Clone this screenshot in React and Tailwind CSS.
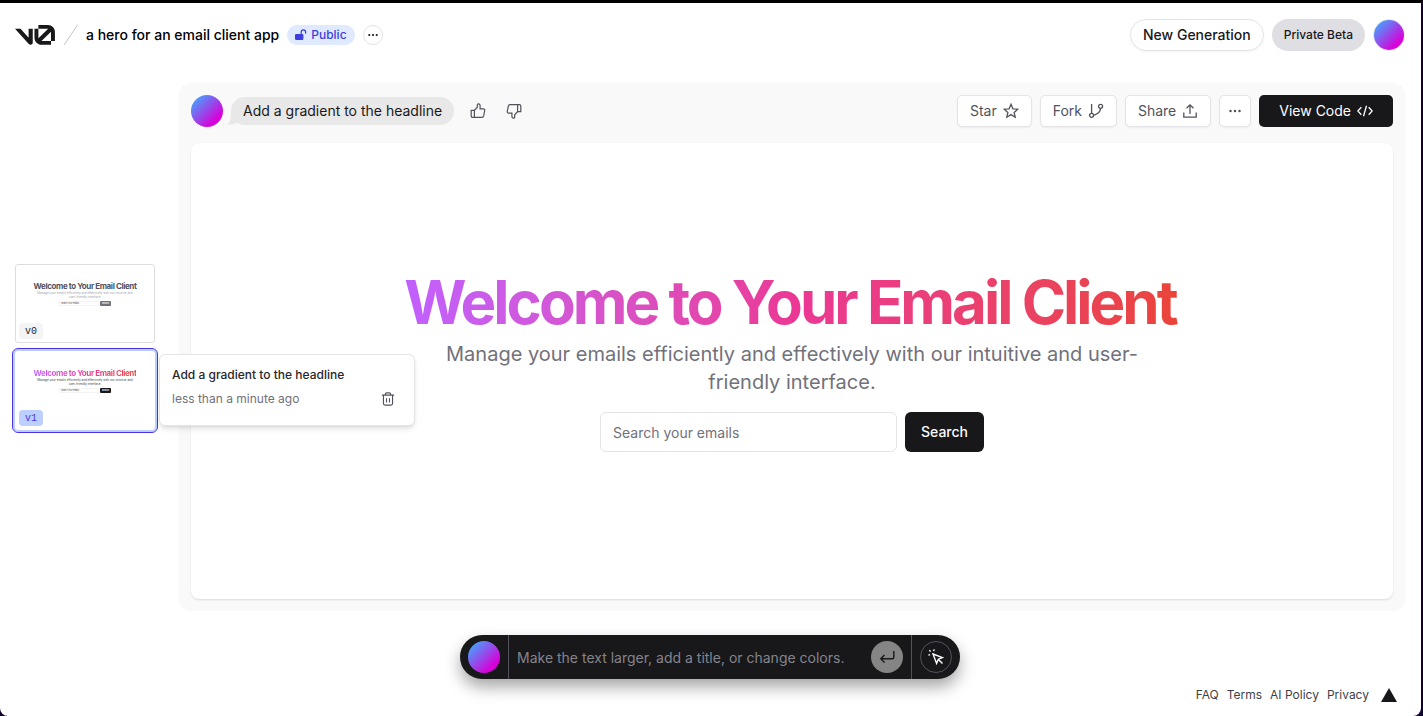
import React from "react";

function Icon({ children, className = "size-4", width = 1.3 }) {
  return (
    <svg
      viewBox="0 0 16 16"
      className={className}
      fill="none"
      stroke="currentColor"
      strokeWidth={width}
      aria-hidden="true"
    >
      {children}
    </svg>
  );
}

function ThumbUpShape() {
  return (
    <>
      <path d="M1.2 7.4h3.2v7H2.7a1.5 1.5 0 0 1-1.5-1.5z" />
      <path d="M4.4 7.4 7.3 4.2V2.1c0-.8.4-1.3 1.1-1.3.9 0 1.7.7 1.7 1.7v3.3h3.3c.9 0 1.5.8 1.3 1.7l-1 5.4c-.2.9-.9 1.5-1.8 1.5H4.4" />
    </>
  );
}

function Dots({ className }) {
  return (
    <svg viewBox="0 0 16 16" className={className} fill="currentColor" aria-hidden="true">
      <circle cx="2" cy="8" r="1.7" />
      <circle cx="8" cy="8" r="1.7" />
      <circle cx="14" cy="8" r="1.7" />
    </svg>
  );
}

function Logo() {
  return (
    <svg viewBox="0 0 40 20" className="h-5 w-10" fill="#18181b" aria-label="v0">
      <path d="M23.3919 0H32.9188C36.7819 0 39.9136 3.13165 39.9136 6.99475V16.0805H36.0006V6.99475C36.0006 6.90167 35.9969 6.80925 35.9898 6.71766L26.4628 16.079C26.4949 16.08 26.5272 16.0805 26.5595 16.0805H36.0006V19.7762H26.5595C22.6964 19.7762 19.4788 16.6139 19.4788 12.7508V3.68923H23.3919V12.7508C23.3919 12.9253 23.4054 13.0977 23.4316 13.2668L33.1682 3.6995C33.0861 3.6927 33.003 3.68923 32.9188 3.68923H23.3919V0Z" />
      <path d="M13.7688 19.0956L0 3.68759H5.53933L13.6231 12.7337V3.68759H17.7535V17.5746C17.7535 19.6705 15.1654 20.6584 13.7688 19.0956Z" />
    </svg>
  );
}

function Avatar({ className = "size-8" }) {
  return (
    <span
      className={`${className} block shrink-0 rounded-full bg-[linear-gradient(135deg,#3fa9ff_8%,#d900d9_78%)]`}
    />
  );
}

function Header() {
  return (
    <header className="flex h-16 items-center justify-between pr-4 pl-[15px]">
      <div className="flex items-center gap-2">
        <a href="#home">
          <Logo />
        </a>
        <svg viewBox="0 0 15 20" className="h-5 w-[15px]" fill="none" stroke="#c4c4c4" aria-hidden="true">
          <path d="M1 20 14.500 0" />
        </svg>
        <h1 className="text-sm font-medium text-black">a hero for an email client app</h1>
        <span className="flex h-5 items-center gap-1 rounded-full bg-[#dfeaff] px-2 text-xs font-medium text-[#3d3fdc]">
          <svg viewBox="0 0 12 12" className="size-3" aria-hidden="true">
            <rect x="0" y="5" width="8.4" height="6" rx="1.3" fill="currentColor" />
            <path d="M6.2 5.2V3a2.2 2.2 0 0 1 4.4 0v1.8" fill="none" stroke="currentColor" strokeWidth="1.2" />
          </svg>
          Public
        </span>
        <button
          type="button"
          aria-label="More options"
          className="flex size-5 items-center justify-center rounded-full border border-zinc-200 bg-white text-zinc-900"
        >
          <Dots className="size-2.5" />
        </button>
      </div>
      <div className="flex items-center gap-2">
        <button
          type="button"
          className="h-8 rounded-full border border-zinc-200 px-3 text-sm font-medium text-zinc-900 shadow-xs"
        >
          New Generation
        </button>
        <button
          type="button"
          className="h-8 rounded-full bg-[#dfdee3] px-3 text-xs font-medium text-zinc-900"
        >
          Private Beta
        </button>
        <button type="button" aria-label="Account" className="rounded-full border border-zinc-200">
          <Avatar className="size-[30px]" />
        </button>
      </div>
    </header>
  );
}

function Thumbnail({ label, active, children }) {
  return (
    <div className="relative">
      <button
        type="button"
        aria-label={`Version ${label}`}
        className={`relative flex h-[79px] w-[140px] flex-col items-center rounded-[3px] bg-white pt-[17px] outline-1 ${
          active ? "ring-2 ring-[#bccfff] outline-offset-2 outline-[#4a34ea]" : "-outline-offset-1 outline-[#dededf]"
        }`}
      >
        <span
          className={`text-[8px] leading-[10px] font-bold tracking-tighter ${
            active
              ? "bg-linear-to-r from-[#c160ff] via-[#eb3896] to-[#ea4438] bg-clip-text text-transparent"
              : "text-zinc-600"
          }`}
        >
          Welcome to Your Email Client
        </span>
        <span className={`w-24 text-center text-[3px] leading-[4px] ${active ? "text-zinc-700" : "text-zinc-400"}`}>
          Manage your emails efficiently and effectively with our intuitive and user-friendly interface.
        </span>
        <span className="mt-0.5 flex h-[5px] gap-px">
          <span className="w-10 border border-zinc-100 pl-px text-left text-[2px] leading-[3px] text-zinc-700">
            Search your emails
          </span>
          <span
            className={`w-[11px] rounded-[1px] text-center text-[2px] leading-[5px] font-bold text-white ${
              active ? "bg-zinc-900" : "bg-zinc-500"
            }`}
          >
            Search
          </span>
        </span>
        <span
          className={`absolute bottom-1 left-1 flex h-4 w-6 items-center justify-center rounded-sm font-['Liberation_Mono',monospace] text-[10px] ${
            active ? "bg-[#bccfff] text-[#4a34ea]" : "bg-zinc-100 text-zinc-800"
          }`}
        >
          {label}
        </span>
      </button>
      {children}
    </div>
  );
}

function VersionCard() {
  return (
    <div className="absolute top-[3px] left-36 z-10 flex h-18 w-64 flex-col gap-1 rounded-md border border-zinc-200 bg-white px-3 pt-[10px] text-xs shadow-md">
      <p className="leading-5 font-medium text-zinc-800">Add a gradient to the headline</p>
      <div className="flex items-center justify-between pr-1 leading-5 text-zinc-500">
        <span>less than a minute ago</span>
        <button type="button" aria-label="Delete version" className="flex size-5 items-center justify-center text-zinc-600">
          <Icon className="size-3.5">
            <path d="M1 3.6h14M5 3.4V2.6C5 1.6 5.6 1 6.6 1h2.8c1 0 1.6.6 1.6 1.6v.8M2.8 3.6v9.6c0 1 .7 1.8 1.8 1.8h6.8c1.1 0 1.8-.8 1.8-1.8V3.6M6.3 7v5M9.7 7v5" />
          </Icon>
        </button>
      </div>
    </div>
  );
}

const toolClass =
  "flex h-8 items-center gap-1.5 rounded-[5px] border border-zinc-200 bg-white px-3 text-sm text-zinc-600 shadow-xs";

function Toolbar() {
  return (
    <div className="flex items-center justify-between">
      <div className="flex items-center">
        <Avatar />
        <div className="relative ml-2 flex h-7 items-center rounded-full bg-[#e8e8e8] px-3 text-sm text-zinc-900">
          <svg viewBox="0 0 14 14" className="absolute bottom-0 -left-1 size-3.5" fill="#e8e8e8" aria-hidden="true">
            <path d="M4 1C4 7 3.600 11 0 13.600c3.500.2 7-.4 10-2.100L14 6z" />
          </svg>
          <span className="relative">Add a gradient to the headline</span>
        </div>
        <div className="ml-2 flex gap-1 text-zinc-600">
          <button type="button" aria-label="Good result" className="flex size-8 items-center justify-center">
            <Icon width={1.2}>
              <ThumbUpShape />
            </Icon>
          </button>
          <button type="button" aria-label="Bad result" className="flex size-8 items-center justify-center">
            <Icon className="size-4 rotate-180" width={1.2}>
              <ThumbUpShape />
            </Icon>
          </button>
        </div>
      </div>
      <div className="flex items-center gap-2">
        <button type="button" className={toolClass}>
          Star
          <Icon>
            <path d="m8 1.300 1.900 4.500 4.900.4-3.700 3.200 1.100 4.800L8 11.600l-4.200 2.600 1.100-4.800L1.200 6.200l4.900-.4z" />
          </Icon>
        </button>
        <button type="button" className={toolClass}>
          Fork
          <Icon>
            <path d="M3.600 1v9.200M3.600 12.300c4 0 9-2.500 9-7.300" />
            <circle cx="3.600" cy="12.300" r="2" fill="white" />
            <circle cx="12.600" cy="3.300" r="2" fill="white" />
          </Icon>
        </button>
        <button type="button" className={toolClass}>
          Share
          <Icon>
            <path d="M1.800 9.500v4.700h12.400V9.500M8 11V2M4.500 5.300 8 1.800l3.500 3.500" />
          </Icon>
        </button>
        <button
          type="button"
          aria-label="More actions"
          className="flex size-8 items-center justify-center rounded-[5px] border border-zinc-200 bg-white text-zinc-600 shadow-xs"
        >
          <Dots className="size-3" />
        </button>
        <button
          type="button"
          className="flex h-8 items-center gap-1.5 rounded-[5px] bg-zinc-900 px-5 text-sm text-white"
        >
          View Code
          <Icon>
            <path d="M4.300 4.300.8 8l3.500 3.700M11.700 4.300 15.200 8l-3.500 3.700M9.500 2.800l-3 10.400" />
          </Icon>
        </button>
      </div>
    </div>
  );
}

function Preview() {
  return (
    <div className="flex flex-1 flex-col items-center justify-center rounded-lg bg-white px-6 pb-[18px] text-center shadow-[0_1px_2px_rgba(0,0,0,0.12)]">
      <h2 className="bg-linear-to-r from-[#c160ff] via-[#eb3896] to-[#ea4438] bg-clip-text pr-1 text-6xl leading-[60px] font-bold tracking-tighter text-transparent">
        Welcome to Your Email Client
      </h2>
      <p className="mt-2 max-w-[700px] text-xl text-zinc-500">
        Manage your emails efficiently and effectively with our intuitive and user-friendly interface.
      </p>
      <form className="mt-4 flex w-96 gap-2" onSubmit={(e) => e.preventDefault()}>
        <input
          type="email"
          aria-label="Search your emails"
          placeholder="Search your emails"
          className="h-10 min-w-0 flex-1 rounded-md border border-zinc-200 px-3 text-sm placeholder:text-zinc-500"
        />
        <button type="submit" className="h-10 rounded-md bg-zinc-900 px-4 text-sm font-medium text-zinc-50">
          Search
        </button>
      </form>
    </div>
  );
}

function PromptBar() {
  return (
    <form
      className="mx-auto flex h-11 w-[500px] items-center rounded-full bg-[#18181b] px-2 shadow-[0_8px_16px_rgba(0,0,0,0.35)]"
      onSubmit={(e) => e.preventDefault()}
    >
      <Avatar />
      <span className="ml-2 h-full w-px bg-zinc-600" />
      <input
        type="text"
        aria-label="Prompt"
        placeholder="Make the text larger, add a title, or change colors."
        className="h-full min-w-0 flex-1 bg-transparent px-2 text-sm text-white outline-none placeholder:text-[#85848c]"
      />
      <button
        type="submit"
        aria-label="Send"
        className="flex size-8 items-center justify-center rounded-full bg-[#858585] text-[#18181b]"
      >
        <Icon width={1.4}>
          <path d="M14.800 2v6.200c0 .9-.5 1.500-1.400 1.500H1.800M5.500 6 1.800 9.700l3.700 3.700" />
        </Icon>
      </button>
      <span className="mx-2 h-full w-px bg-zinc-600" />
      <button
        type="button"
        aria-label="Pick an element"
        className="flex size-8 items-center justify-center rounded-full border border-zinc-600 text-white"
      >
        <Icon width={1.4}>
          <path d="m5 5 9.500 3.600-4.200 1.600L8.600 14.400zM10.400 10.400l4.100 4.100" />
          <path d="M6.200.4 5.700 2.100M.4 6.200l1.700-.5M1.300 1.300l1.300 1.300" />
        </Icon>
      </button>
    </form>
  );
}

const footerLinks = ["FAQ", "Terms", "AI Policy", "Privacy"];

export default function App() {
  return (
    <div className="min-h-screen bg-[#12002c] font-['Inter',sans-serif]">
      <div className="flex min-h-screen flex-col border-t-3 border-r-2 border-t-black border-r-[#12002c]">
        <div className="flex flex-1 flex-col rounded-b-lg bg-white">
          <Header />
          <main className="flex flex-1 gap-6 pt-4 pr-4 pl-[15px]">
            <aside className="flex flex-col justify-center gap-2">
              <Thumbnail label="v0" />
              <Thumbnail label="v1" active>
                <VersionCard />
              </Thumbnail>
            </aside>
            <section className="flex min-w-0 flex-1 flex-col gap-4 rounded-xl bg-[#f9f9f9] p-3">
              <Toolbar />
              <Preview />
            </section>
          </main>
          <div className="pt-6 pr-px">
            <PromptBar />
          </div>
          <footer className="flex items-center justify-end gap-2 pt-2 pr-6 pb-[13px] text-xs text-zinc-700">
            {footerLinks.map((label) => (
              <a key={label} href="#footer">
                {label}
              </a>
            ))}
            <svg viewBox="0 0 16 14" className="ml-1 h-3.5 w-4" fill="#18181b" aria-hidden="true">
              <path d="M8 0l8 14H0z" />
            </svg>
          </footer>
        </div>
      </div>
    </div>
  );
}
